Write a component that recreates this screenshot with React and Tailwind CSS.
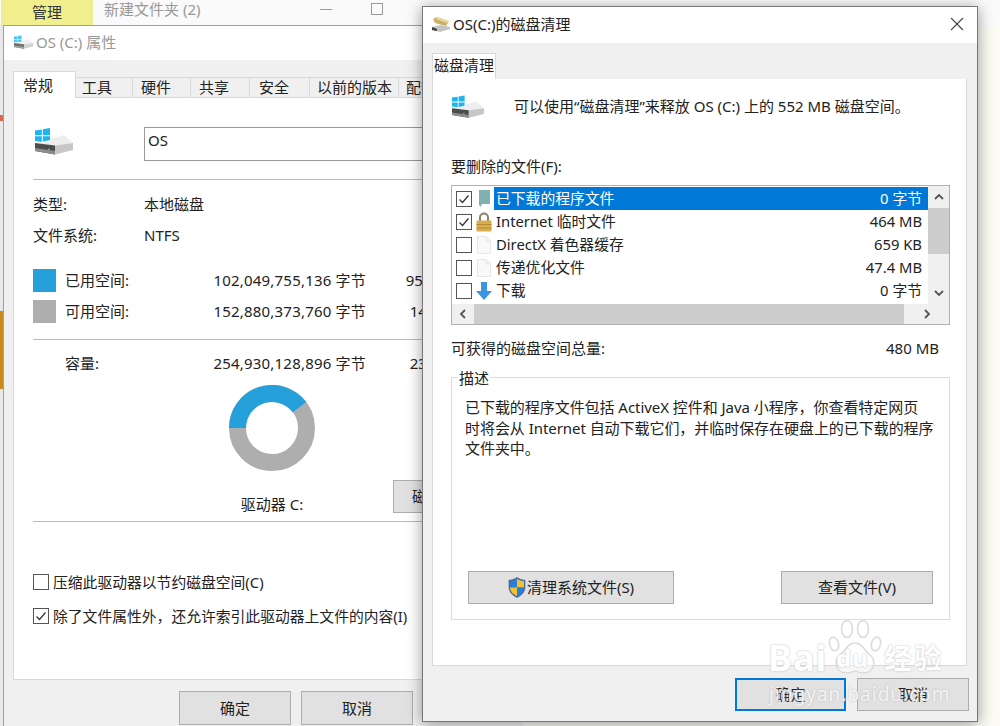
const DriveIcon = ({ className }) => (
  <svg viewBox="0 0 38 28" className={className}>
    {/* windows logo */}
    <path d="M0 3.4 L6.8 2.4 V8.2 H0 Z M7.8 2.2 L15 1 V8.2 H7.8 Z M0 9.2 H6.8 V15 L0 14 Z M7.8 9.2 H15 V16.4 L7.8 15.2 Z" fill="#1fb4ee" />
    {/* drive */}
    <path d="M15 12 L29 8 L38 16 L20 18.5 L0 16 L15 13 Z" fill="#eeeeee" />
    <path d="M0 16 L20 18.5 V27.5 L0 24 Z" fill="#4c4c4c" />
    <path d="M0 21 L20 24 V27.5 L0 24 Z" fill="#8c8c8c" />
    <path d="M20 18.5 L38 16 V23 L20 27.5 Z" fill="#c6c6c6" />
    <rect x="13" y="21.5" width="2" height="1.6" fill="#3fc35a" />
  </svg>
);

const CleanIcon = () => (
  <svg viewBox="0 0 18 15" className="w-[18px] h-[15px]">
    <path d="M0 10 L8 8 L18 10 L18 12 L8 15 L0 13 Z" fill="#c4c4c4" />
    <path d="M0 10 L5 12 L5 14 L0 13 Z" fill="#3c3c3c" />
    <path d="M1 2 L5 0 L17 4 L14 9 L3 6 Z" fill="#c9b268" />
    <path d="M5 0 L17 4 L15.5 6 L4 2 Z" fill="#e8dba0" />
  </svg>
);

const Check = ({ checked, className = '' }) => (
  <div className={`w-4 h-4 border border-[#555] bg-white shrink-0 flex items-center justify-center ${className}`}>
    {checked && (
      <svg viewBox="0 0 14 14" className="w-[14px] h-[14px]">
        <path d="M2.5 7.5 L5.5 10.5 L11.5 3.5" fill="none" stroke="#333" strokeWidth="1.2" />
      </svg>
    )}
  </div>
);

const BookIcon = () => (
  <svg viewBox="0 0 12 17" className="w-[12px] h-[17px]">
    <path d="M1 0 H12 V14 L4 14 L2.5 17 L1 15 Z" fill="#7fb2ae" />
  </svg>
);

const LockIcon = () => (
  <svg viewBox="0 0 16 20" className="w-4 h-5">
    <path d="M4 9 V5.5 A4 4 0 0 1 12 5.5 V9" fill="none" stroke="#8d8468" strokeWidth="2" />
    <rect x="0.5" y="8.5" width="15" height="11" rx="1" fill="#d6ad52" />
    <rect x="0.5" y="12" width="15" height="1" fill="#b58a30" />
    <rect x="0.5" y="15.5" width="15" height="1" fill="#b58a30" />
  </svg>
);

const DocIcon = () => (
  <svg viewBox="0 0 14 18" className="w-[14px] h-[18px]">
    <path d="M0.5 0.5 H9 L13.5 5 V17.5 H0.5 Z" fill="#f9f9f9" stroke="#e6e6e6" />
    <path d="M9 0.5 V5 H13.5" fill="#f0f0f0" stroke="#e6e6e6" />
  </svg>
);

const ArrowIcon = () => (
  <svg viewBox="0 0 16 18" className="w-4 h-[18px]">
    <path d="M5 0 H11 V9 H16 L8 18 L0 9 H5 Z" fill="#3a96e4" />
  </svg>
);

const ShieldIcon = () => (
  <svg viewBox="0 0 18 21" className="w-[18px] h-[21px]">
    <path d="M9 0.5 C6 2.5 3.5 3.2 1 3.2 V10 C1 15 4.5 18.5 9 20.5 C13.5 18.5 17 15 17 10 V3.2 C14.5 3.2 12 2.5 9 0.5 Z" fill="#3c74c4" stroke="#44566e" strokeWidth="0.6" />
    <path d="M9 2 V10.5 H2 V4.2 C4.5 4 7 3.2 9 2 Z" fill="#2b7fd6" />
    <path d="M9 2 C11 3.2 13.5 4 16 4.2 V10.5 H9 Z" fill="#f4c02e" />
    <path d="M2 10.5 H9 V19 C5 17.5 2.4 14.5 2 10.5 Z" fill="#f4c02e" />
    <path d="M9 10.5 H16 C15.6 14.5 13 17.5 9 19 Z" fill="#2b7fd6" />
  </svg>
);

const Btn = ({ className = '', children }) => (
  <div className={`h-[33px] bg-[#e1e1e1] border border-[#adadad] flex items-center justify-center text-[15px] text-[#222] shrink-0 ${className}`}>
    {children}
  </div>
);

const Arrow = ({ d }) => (
  <svg viewBox="0 0 10 10" className="w-[10px] h-[10px]">
    <path d={d} fill="none" stroke="#555" strokeWidth="1.8" />
  </svg>
);

const tabs = [
  ['工具', 'w-[57px] pl-[6px]'],
  ['硬件', 'w-[58px] pl-[8px]'],
  ['共享', 'w-[59px] pl-[8px]'],
  ['安全', 'w-[60px] pl-[9px]'],
  ['以前的版本', 'w-[89px] pl-[7px]'],
  ['配额', 'w-[60px] pl-[7px]'],
];

const files = [
  { name: '已下载的程序文件', size: '0 字节', checked: true, icon: <BookIcon />, selected: true },
  { name: 'Internet 临时文件', size: '464 MB', checked: true, icon: <LockIcon /> },
  { name: 'DirectX 着色器缓存', size: '659 KB', checked: false, icon: <DocIcon /> },
  { name: '传递优化文件', size: '47.4 MB', checked: false, icon: <DocIcon /> },
  { name: '下载', size: '0 字节', checked: false, icon: <ArrowIcon /> },
];

const PropsWindow = () => (
  <div className="absolute left-[3px] top-[25px] w-[520px] h-[701px] bg-[#f0f0f0] border-l border-t border-[#a0a0a0] flex flex-col overflow-hidden">
    <div className="h-[34px] bg-white flex items-center pl-[10px] gap-[3px] pb-[2px] shrink-0 text-[15px] text-[#999]">
      <DriveIcon className="w-[19px] h-[14px] opacity-80" />
      <span>OS (C:) 属性</span>
    </div>
    <div className="flex items-end h-[38px] pl-[9px] shrink-0 text-[15px] text-[#222]">
      <div className="w-[63px] h-[27px] bg-white border border-b-0 border-[#d9d9d9] pl-[9px] leading-[26px]">常规</div>
      {tabs.map(([label, w]) => (
        <div key={label} className={`${w} h-[21px] border border-l-0 border-[#d9d9d9] flex items-center whitespace-nowrap overflow-hidden`}>{label}</div>
      ))}
    </div>
    <div className="ml-[9px] h-[582px] bg-white border-l border-b border-[#d9d9d9] pl-[19px] shrink-0 text-[15px] text-[#222] flex flex-col">
      <div className="flex mt-[29px] h-[34px]">
        <div className="w-[111px] pl-[2px]"><DriveIcon className="w-[38px] h-[28px]" /></div>
        <div className="flex-1 border border-[#9a9a9a] pl-[3px] leading-[24px]">OS</div>
      </div>
      <div className="h-px bg-[#b8b8b8] mt-[18px]" />
      <div className="flex items-center h-[32px] mt-[8px]"><span className="w-[111px]">类型:</span><span>本地磁盘</span></div>
      <div className="flex items-center h-[31px]"><span className="w-[111px]">文件系统:</span><span>NTFS</span></div>
      <div className="flex items-center h-[31px] mt-[14px]">
        <div className="w-[23px] h-[23px] bg-[#26a0da]" />
        <span className="w-[92px] ml-[9px]">已用空间:</span>
        <span className="w-[209px] text-right tracking-[0.2px]">102,049,755,136 字节</span>
        <span className="w-[94px] text-right">95.0 GB</span>
      </div>
      <div className="flex items-center h-[31px]">
        <div className="w-[23px] h-[23px] bg-[#aeaeae]" />
        <span className="w-[92px] ml-[9px]">可用空间:</span>
        <span className="w-[209px] text-right tracking-[0.2px]">152,880,373,760 字节</span>
        <span className="w-[94px] text-right">142 GB</span>
      </div>
      <div className="h-px bg-[#b8b8b8] mt-[12px]" />
      <div className="flex items-center h-[32px] mt-[7px]">
        <span className="w-[92px] ml-[32px]">容量:</span>
        <span className="w-[209px] text-right tracking-[0.2px]">254,930,128,896 字节</span>
        <span className="w-[94px] text-right">237 GB</span>
      </div>
      <div className="flex items-start mt-[6px] h-[136px]">
        <div className="w-[86px] ml-[196px] flex flex-col items-center">
          <svg viewBox="0 0 86 86" className="w-[86px] h-[86px]">
            <circle cx="43" cy="43" r="34.5" fill="none" stroke="#aeaeae" strokeWidth="17" />
            <path d="M8.5 43 A34.5 34.5 0 0 1 70.55 22.24" fill="none" stroke="#26a0da" strokeWidth="17" />
          </svg>
          <span className="mt-[22px] whitespace-nowrap">驱动器 C:</span>
        </div>
        <Btn className="w-[90px] ml-[78px] mt-[95px] !justify-start pl-[18px] whitespace-nowrap">磁盘清理(D)</Btn>
      </div>
      <div className="h-px bg-[#b8b8b8]" />
      <div className="flex items-center gap-[4px] h-[24px] mt-[48px] text-[14.8px]"><Check />压缩此驱动器以节约磁盘空间(C)</div>
      <div className="flex items-center gap-[4px] h-[24px] mt-[10px] text-[14.8px]"><Check checked />除了文件属性外，还允许索引此驱动器上文件的内容(I)</div>
    </div>
    <div className="flex gap-[10px] pl-[175px] pt-[11px]">
      <Btn className="w-[112px] !h-[34px]">确定</Btn>
      <Btn className="w-[112px] !h-[34px]">取消</Btn>
    </div>
  </div>
);

const CleanupWindow = () => (
  <div className="absolute left-[422px] top-[6px] w-[556px] h-[716px] bg-[#f0f0f0] border border-[#777] shadow-[0_2px_14px_rgba(0,0,0,0.4)] flex flex-col text-[15px] text-[#222]">
    <div className="h-[36px] bg-white flex items-center pl-[9px] gap-[3px] pb-[2px] shrink-0">
      <CleanIcon />
      <span className="flex-1">OS(C:)的磁盘清理</span>
      <svg viewBox="0 0 14 14" className="w-[14px] h-[14px] mr-[13px]">
        <path d="M1 1 L13 13 M13 1 L1 13" stroke="#444" strokeWidth="1.1" />
      </svg>
    </div>
    <div className="pl-[9px] pt-[10px] shrink-0">
      <div className="w-[64px] h-[26px] bg-white border border-b-0 border-[#d9d9d9] flex items-center justify-center pb-[2px]">磁盘清理</div>
    </div>
    <div className="ml-[9px] w-[535px] h-[587px] bg-white border border-t-0 border-[#d9d9d9] pl-[18px] pr-[16px] shrink-0 flex flex-col">
      <div className="flex items-center h-[30px] mt-[12px] shrink-0">
        <DriveIcon className="w-[32px] h-[29px] ml-[1px] shrink-0" />
        <span className="ml-[30px] mt-[1px]">可以使用“磁盘清理”来释放 OS (C:) 上的 552 MB 磁盘空间。</span>
      </div>
      <div className="h-[22px] leading-[22px] mt-[34px] shrink-0">要删除的文件(F):</div>
      <div className="h-[140px] mt-[8px] border border-[#b0b0b0] flex flex-col shrink-0">
        <div className="flex h-[118px]">
          <div className="flex-1 pt-px flex flex-col text-[14.8px]">
            {files.map(f => (
              <div key={f.name} className="h-[23px] flex items-center pl-[4px] shrink-0">
                <Check checked={f.checked} />
                <div className="w-[16px] ml-[4px] flex justify-center shrink-0">{f.icon}</div>
                <div className={`flex-1 h-[23px] ml-[2px] pl-[2px] pr-[6px] flex items-center justify-between ${f.selected ? 'bg-[#0078d7] text-white' : ''}`}>
                  <span>{f.name}</span>
                  <span>{f.size}</span>
                </div>
              </div>
            ))}
          </div>
          <div className="w-[21px] flex flex-col items-center shrink-0 bg-[#f0f0f0]">
            <div className="h-[22px] flex items-center justify-center"><Arrow d="M1 7 L5 3 L9 7" /></div>
            <div className="w-full h-[46px] bg-[#cdcdcd]" />
            <div className="flex-1" />
            <div className="h-[22px] flex items-center justify-center"><Arrow d="M1 3 L5 7 L9 3" /></div>
          </div>
        </div>
        <div className="h-[20px] bg-[#f0f0f0] flex items-center">
          <div className="w-[22px] flex justify-center shrink-0"><Arrow d="M7 1 L3 5 L7 9" /></div>
          <div className="flex-1 h-full bg-[#cdcdcd]" />
          <div className="w-[45px] flex justify-center shrink-0"><Arrow d="M3 1 L7 5 L3 9" /></div>
        </div>
      </div>
      <div className="flex justify-between h-[22px] items-center mt-[12px] pr-[11px] shrink-0">
        <span>可获得的磁盘空间总量:</span>
        <span>480 MB</span>
      </div>
      <div className="relative h-[243px] mt-[18px] border border-[#dcdcdc] pl-[13px] pr-[12px] pt-[19px] flex flex-col shrink-0">
        <span className="absolute left-[6px] -top-[10px] bg-white px-px leading-[20px]">描述</span>
        <p className="leading-[20.5px] tracking-[-0.05px]">已下载的程序文件包括 ActiveX 控件和 Java 小程序，你查看特定网页<br />时将会从 Internet 自动下载它们，并临时保存在硬盘上的已下载的程序<br />文件夹中。</p>
        <div className="flex justify-between mt-auto mb-[15px] pl-[3px] pr-[4px]">
          <Btn className="w-[206px] gap-px"><ShieldIcon />清理系统文件(S)</Btn>
          <Btn className="w-[152px]">查看文件(V)</Btn>
        </div>
      </div>
    </div>
    <div className="flex justify-end gap-[11px] pr-[8px] pt-[12px]">
      <Btn className="w-[111px] border-2 !border-[#0078d7]">确定</Btn>
      <Btn className="w-[112px]">取消</Btn>
    </div>
  </div>
);

// Baidu watermark across the lower right corner
const Watermark = () => (
  <div className="absolute left-[768px] top-[619px] w-[180px] h-[84px] pointer-events-none text-white [text-shadow:0_0_2px_#b5b5b5]">
    <svg viewBox="0 0 54 56" className="absolute left-[60px] top-0 w-[54px] h-[56px]">
      <g fill="rgba(255,255,255,0.45)" stroke="#dcdcdc" strokeWidth="1.6">
        <ellipse cx="6" cy="25" rx="4.5" ry="7" transform="rotate(-15 6 25)" />
        <ellipse cx="19" cy="10" rx="5.5" ry="8.5" />
        <ellipse cx="35" cy="10" rx="5.5" ry="8.5" />
        <ellipse cx="48" cy="25" rx="4.5" ry="7" transform="rotate(15 48 25)" />
        <path d="M27 24 C20 24 18 31 12 36 C6 41 7 54 19 54 C23 54 25 52 27 52 C29 52 31 54 35 54 C47 54 48 41 42 36 C36 31 34 24 27 24 Z" />
      </g>
    </svg>
    <div className="absolute left-0 top-[21px] flex items-center font-bold text-[36px] leading-[36px] tracking-[1px] whitespace-nowrap">
      <span className="w-[68px]">Bai</span>
      <span className="w-[48px] text-[24px]">du</span>
      <span className="text-[28px] tracking-[2px]">经验</span>
    </div>
    <span className="absolute left-[1px] top-[64px] text-[19px] leading-[22px] tracking-[1px] whitespace-nowrap text-white/80">jingyan.baidu.com</span>
  </div>
);

export default function App() {
  return (
    <div className="relative w-[1000px] h-[726px] overflow-hidden bg-[#fbfbf4] [font-family:'Noto_Sans','Noto_Sans_CJK_SC',sans-serif]">
      <div className="flex items-center h-[25px] bg-[#fafafa] text-[15px] text-[#999]">
        <div className="w-[92px] h-full ml-px bg-[#f1ee8e] text-[#333] flex items-center justify-center">管理</div>
        <span className="ml-[11px] mt-[-7px]">新建文件夹 (2)</span>
        <div className="w-[12px] h-px bg-[#999] ml-[120px] mt-[-7px]" />
        <div className="w-[12px] h-[12px] border border-[#999] ml-[39px] mt-[-7px]" />
      </div>
      <div className="w-[3px] h-[701px] flex flex-col bg-[#e8e8e8]">
        <div className="h-[90px]" />
        <div className="h-[6px] bg-[#d8694e]" />
        <div className="h-[190px]" />
        <div className="h-[78px] bg-[#c88a1e]" />
      </div>
      <PropsWindow />
      <CleanupWindow />
      <Watermark />
    </div>
  );
}
